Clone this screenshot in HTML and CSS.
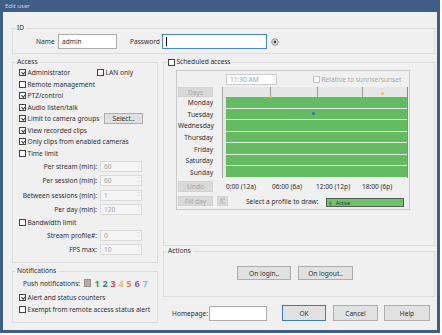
FILE: index.html
```html
<!DOCTYPE html>
<html>
<head>
    <meta charset="utf-8">
    <title>Edit user</title>
    <link rel="stylesheet" href="styles.css">
</head>
<body>
<div class="window">
    <div class="titlebar">Edit user</div>
    <div class="client">

        <fieldset class="group id-group">
            <legend>ID</legend>
            <div class="id-row">
                <span class="lbl name-lbl">Name</span>
                <div class="input name-input">admin</div>
                <span class="lbl pass-lbl">Password</span>
                <div class="input pass-input"><span class="caret"></span></div>
                <svg class="eye" width="8" height="8" viewBox="0 0 8 8">
                    <circle cx="4" cy="4" r="3.2" fill="#fff" stroke="#666" stroke-width="0.8"/>
                    <circle cx="4" cy="4" r="1.4" fill="#333"/>
                </svg>
            </div>
        </fieldset>

        <div class="main">
            <div class="col-left">
                <fieldset class="group access">
                    <legend>Access</legend>
                    <div class="chk-row">
                        <span class="chk admin-chk"><span class="cb on"></span>Administrator</span>
                        <span class="chk"><span class="cb"></span>LAN only</span>
                    </div>
                    <div class="chk-row"><span class="cb"></span>Remote management</div>
                    <div class="chk-row"><span class="cb on"></span>PTZ/control</div>
                    <div class="chk-row"><span class="cb on"></span>Audio listen/talk</div>
                    <div class="chk-row">
                        <span class="chk groups-chk"><span class="cb on"></span>Limit to camera groups</span>
                        <span class="btn select-btn">Select..</span>
                    </div>
                    <div class="chk-row"><span class="cb on"></span>View recorded clips</div>
                    <div class="chk-row"><span class="cb on"></span>Only clips from enabled cameras</div>
                    <div class="chk-row"><span class="cb"></span>Time limit</div>

                    <div class="spin-row">
                        <span class="spin-lbl">Per stream (min):</span>
                        <div class="spin"><span>60</span><span class="arrows">&#708;<br>&#709;</span></div>
                    </div>
                    <div class="spin-row">
                        <span class="spin-lbl">Per session (min):</span>
                        <div class="spin"><span>60</span><span class="arrows">&#708;<br>&#709;</span></div>
                    </div>
                    <div class="spin-row">
                        <span class="spin-lbl">Between sessions (min):</span>
                        <div class="spin"><span>1</span><span class="arrows">&#708;<br>&#709;</span></div>
                    </div>
                    <div class="spin-row">
                        <span class="spin-lbl">Per day (min):</span>
                        <div class="spin"><span>120</span><span class="arrows">&#708;<br>&#709;</span></div>
                    </div>

                    <div class="chk-row"><span class="cb"></span>Bandwidth limit</div>
                    <div class="spin-row short">
                        <span class="spin-lbl">Stream profile#:</span>
                        <div class="spin"><span>0</span><span class="arrows">&#708;<br>&#709;</span></div>
                    </div>
                    <div class="spin-row short">
                        <span class="spin-lbl">FPS max:</span>
                        <div class="spin"><span>10</span><span class="arrows">&#708;<br>&#709;</span></div>
                    </div>
                </fieldset>

                <fieldset class="group notif">
                    <legend>Notifications</legend>
                    <div class="push-row">
                        <span class="push-lbl">Push notifications:</span>
                        <span class="push-box"></span>
                        <span class="n n1">1</span>
                        <span class="n n2">2</span>
                        <span class="n n3">3</span>
                        <span class="n n4">4</span>
                        <span class="n n5">5</span>
                        <span class="n n6">6</span>
                        <span class="n n7">7</span>
                    </div>
                    <div class="chk-row alert-row"><span class="cb on"></span>Alert and status counters</div>
                    <div class="chk-row"><span class="cb"></span>Exempt from remote access status alert</div>
                </fieldset>
            </div>

            <div class="col-right">
                <fieldset class="group sched">
                    <legend><span class="cb"></span>Scheduled access</legend>
                    <div class="panel">
                        <div class="toolbar">
                            <div class="spin time-spin"><span>11:30 AM</span><span class="arrows">&#708;<br>&#709;</span></div>
                            <span class="rel-chk"><span class="cb off"></span>Relative to sunrise/sunset</span>
                        </div>

                        <div class="sched-grid">
                            <span class="btn dis days-btn">Days</span>
                            <div class="timeline">
                                <div class="tl-head"></div>
                                <div class="bar"></div>
                                <div class="bar"></div>
                                <div class="bar"></div>
                                <div class="bar"></div>
                                <div class="bar"></div>
                                <div class="bar"></div>
                                <div class="bar"></div>
                                <span class="dot yellow d1"></span>
                                <span class="dot yellow d2"></span>
                                <span class="dot blue d3"></span>
                            </div>
                            <span class="day">Monday</span>
                            <span class="day">Tuesday</span>
                            <span class="day">Wednesday</span>
                            <span class="day">Thursday</span>
                            <span class="day">Friday</span>
                            <span class="day">Saturday</span>
                            <span class="day">Sunday</span>
                        </div>

                        <div class="undo-row">
                            <span class="btn dis undo-btn">Undo</span>
                            <div class="ticks">
                                <span class="tick t1">0:00 (12a)</span>
                                <span class="tick t2">06:00 (6a)</span>
                                <span class="tick t3">12:00 (12p)</span>
                                <span class="tick">18:00 (6p)</span>
                            </div>
                        </div>

                        <div class="fill-row">
                            <span class="btn dis fill-btn">Fill day</span>
                            <span class="btn dis mini-btn">
                                <svg width="7" height="6" viewBox="0 0 7 6"><path d="M1 1h5M1 3h3M1 5h5" stroke="#a8a8a8" stroke-width="0.8"/></svg>
                            </span>
                            <span class="profile-lbl">Select a profile to draw:</span>
                            <div class="profile-drop"><span class="drop-mark">&#9646;</span>Active<span class="drop-arrow">&#709;</span></div>
                        </div>
                    </div>
                </fieldset>

                <fieldset class="group actions">
                    <legend>Actions</legend>
                    <div class="action-row">
                        <span class="btn login-btn">On login..</span>
                        <span class="btn logout-btn">On logout..</span>
                    </div>
                </fieldset>

                <div class="bottom-row">
                    <span class="home-lbl">Homepage:</span>
                    <div class="input home-input"></div>
                    <span class="btn ok-btn">OK</span>
                    <span class="btn cancel-btn">Cancel</span>
                    <span class="btn help-btn">Help</span>
                </div>
            </div>
        </div>
    </div>
</div>
</body>
</html>
```
FILE: styles.css
```css
* {
    box-sizing: border-box;
}

body {
    margin: 0;
    background: #fff;
    font-family: "Noto Sans", "Open Sans", sans-serif;
    font-size: 6.6px;
    color: #2e2e2e;
}

.window {
    width: 440px;
    height: 333px;
    background: #3e5e86;
    display: flex;
    flex-direction: column;
}

.titlebar {
    height: 12px;
    line-height: 12px;
    padding-left: 5px;
    font-size: 6px;
    color: #cbd6e4;
}

.client {
    flex: 1;
    margin: 0 3px 3px;
    background: #f0f0f0;
    padding: 11px 2px 0 9px;
    display: flex;
    flex-direction: column;
}

/* group boxes */
fieldset.group {
    margin: 0;
    padding: 0;
    border: 1px solid #dcdcdc;
    min-width: 0;
}
legend {
    padding: 0 2px;
    margin-left: 2px;
    height: 10px;
    line-height: 10px;
    display: flex;
    align-items: center;
}

.id-group {
    height: 31px;
}
.id-row {
    display: flex;
    align-items: center;
    height: 17px;
    padding-left: 23px;
}
.name-lbl {
    width: 22px;
}
.pass-lbl {
    width: 29px;
    margin-left: 13px;
    margin-right: 3px;
}
.input {
    height: 15px;
    background: #fff;
    border: 1px solid #acacac;
    padding-left: 3px;
    line-height: 13px;
}
.name-input {
    width: 59px;
}
.pass-input {
    width: 105px;
    border-color: #4a86cf;
    display: flex;
    align-items: center;
}
.caret {
    width: 1px;
    height: 9px;
    background: #000;
}
.eye {
    margin-left: 4px;
}

.main {
    display: grid;
    grid-template-columns: 146px 272px;
    column-gap: 5px;
    margin-top: 3px;
}
.col-left {
    display: flex;
    flex-direction: column;
    gap: 3px;
}
.access {
    height: 206px;
}
.notif {
    height: 57px;
}

/* checkboxes */
.chk-row {
    display: flex;
    align-items: center;
    height: 11.5px;
    padding-left: 6px;
    white-space: nowrap;
}
.chk {
    display: flex;
    align-items: center;
}
.admin-chk {
    width: 78px;
}
.groups-chk {
    width: 85px;
}
.cb {
    position: relative;
    width: 7px;
    height: 7px;
    border: 1px solid #444;
    background: #fff;
    margin-right: 1.5px;
    flex: none;
}
.cb.on::after {
    content: '';
    position: absolute;
    left: 1.6px;
    top: 0;
    width: 1.6px;
    height: 3.4px;
    border: solid #333;
    border-width: 0 1px 1px 0;
    transform: rotate(45deg);
}
.cb.off {
    border-color: #c4c4c4;
}

.btn {
    display: flex;
    align-items: center;
    justify-content: center;
    background: #e1e1e1;
    border: 1px solid #adadad;
    white-space: nowrap;
}
.btn.dis {
    background: #d9d9d9;
    border-color: #d3d3d3;
    color: #a6a6a6;
}
.select-btn {
    width: 39px;
    height: 11px;
    margin-top: -1px;
}

/* spin boxes */
.spin-row {
    display: flex;
    align-items: center;
    height: 14.5px;
}
.spin-row.short {
    height: 14px;
}
.spin-lbl {
    width: 84px;
    text-align: right;
    white-space: nowrap;
}
.spin {
    display: flex;
    align-items: center;
    justify-content: space-between;
    width: 42px;
    height: 11px;
    margin-left: 3px;
    padding-left: 3px;
    background: #f5f5f5;
    border: 1px solid #d9d9d9;
    color: #a3a3a3;
}
.arrows {
    font-size: 4px;
    line-height: 3.5px;
    width: 5px;
    text-align: center;
    color: #888;
}

/* notifications */
.push-row {
    display: flex;
    align-items: center;
    height: 14px;
    padding-left: 10px;
    white-space: nowrap;
}
.push-lbl {
    margin-right: 4px;
}
.push-box {
    width: 7px;
    height: 8px;
    background: #b9a9ab;
    border: 1px solid #9a8a8c;
    margin-right: 2px;
}
.n {
    width: 8px;
    text-align: center;
    font-weight: bold;
    font-size: 9px;
}
.n1 { color: #3f9a3c; }
.n2 { color: #2d7f9e; }
.n3 { color: #e0443c; }
.n4 { color: #e8c23c; }
.n5 { color: #e38a38; }
.n6 { color: #8a5ac6; }
.n7 { color: #6ccad2; }
.alert-row {
    margin-top: 2px;
}

/* schedule */
.col-right {
    display: flex;
    flex-direction: column;
}
.sched {
    height: 189px;
}
.sched legend {
    margin-left: 3px;
    padding: 0 2px 0 1px;
}
.panel {
    width: 234px;
    height: 140px;
    margin: 3px 0 0 12px;
    border: 1px solid #c9c9c9;
}
.toolbar {
    display: flex;
    align-items: center;
    height: 16px;
    padding-left: 49px;
}
.time-spin {
    width: 51px;
    margin-left: 0;
    background: #fff;
    border-color: #cfcfcf;
}
.rel-chk {
    display: flex;
    align-items: center;
    margin-left: 36px;
    color: #a6a6a6;
    white-space: nowrap;
}

.sched-grid {
    display: grid;
    grid-template-columns: 35px 186px;
    grid-template-rows: 10px repeat(7, 1fr);
    column-gap: 9px;
    height: 91px;
    margin-left: 1px;
}
.days-btn {
    grid-column: 1;
    grid-row: 1;
}
.day {
    grid-column: 1;
    text-align: right;
    align-self: center;
}
.timeline {
    grid-column: 2;
    grid-row: 1 / 9;
    position: relative;
    display: flex;
    flex-direction: column;
    padding-left: 3px;
    border-left: 1px solid #a9a9a9;
    border-right: 1px solid #8a8a8a;
    background:
        linear-gradient(#9a9a9a, #9a9a9a) 47px 0 / 1px 100% no-repeat,
        linear-gradient(#9a9a9a, #9a9a9a) 94px 0 / 1px 100% no-repeat,
        linear-gradient(#9a9a9a, #9a9a9a) 139px 0 / 1px 100% no-repeat,
        #e6e6e6;
}
.tl-head {
    height: 10px;
    flex: none;
}
.bar {
    flex: 1;
    background: #64bb62;
    border-bottom: 1.5px solid #e3ede3;
}
.dot {
    position: absolute;
    width: 3px;
    height: 3px;
    border-radius: 50%;
}
.yellow {
    background: #f0c832;
}
.blue {
    background: #2b6fc4;
}
.d1 { left: 46px; top: 8px; }
.d2 { left: 158px; top: 5px; }
.d3 { left: 89px; top: 25px; }

.undo-row {
    display: flex;
    align-items: center;
    height: 16px;
    padding-left: 1px;
}
.undo-btn {
    width: 35px;
    height: 11px;
}
.ticks {
    display: flex;
    margin-left: 13px;
    white-space: nowrap;
}
.tick {
    flex: none;
}
.t1 { width: 46px; }
.t2 { width: 44px; }
.t3 { width: 46px; }

.fill-row {
    display: flex;
    align-items: center;
    height: 14px;
    padding-left: 1px;
}
.fill-btn {
    width: 35px;
    height: 10px;
}
.mini-btn {
    width: 11px;
    height: 10px;
    margin-left: 4px;
}
.profile-lbl {
    margin-left: 18px;
    white-space: nowrap;
}
.profile-drop {
    display: flex;
    align-items: center;
    width: 78px;
    height: 9px;
    margin-left: auto;
    margin-right: 5px;
    margin-top: 3px;
    background: #6cc36a;
    border: 1px solid #5a5a5a;
    font-size: 5px;
    color: #1e3a1e;
}
.drop-mark {
    color: #3f8f3c;
    margin: 0 4px 0 2px;
    font-size: 5px;
}
.drop-arrow {
    margin-left: auto;
    margin-right: 1px;
    color: #555;
    font-size: 5px;
}

/* actions */
.actions {
    height: 51px;
    margin-top: 1px;
}
.action-row {
    display: flex;
    margin-top: 10px;
    padding-left: 73px;
}
.login-btn {
    width: 54px;
    height: 14px;
}
.logout-btn {
    width: 55px;
    height: 14px;
    margin-left: 7px;
}

/* bottom buttons */
.bottom-row {
    display: flex;
    align-items: center;
    height: 16px;
    margin-top: 8px;
    padding-left: 9px;
}
.home-lbl {
    width: 37px;
}
.home-input {
    width: 58px;
    height: 15px;
}
.ok-btn {
    width: 44px;
    height: 16px;
    margin-left: 15px;
    border-color: #3d7bc6;
}
.cancel-btn {
    width: 45px;
    height: 16px;
    margin-left: 7px;
}
.help-btn {
    width: 46px;
    height: 16px;
    margin-left: 6px;
}
```
